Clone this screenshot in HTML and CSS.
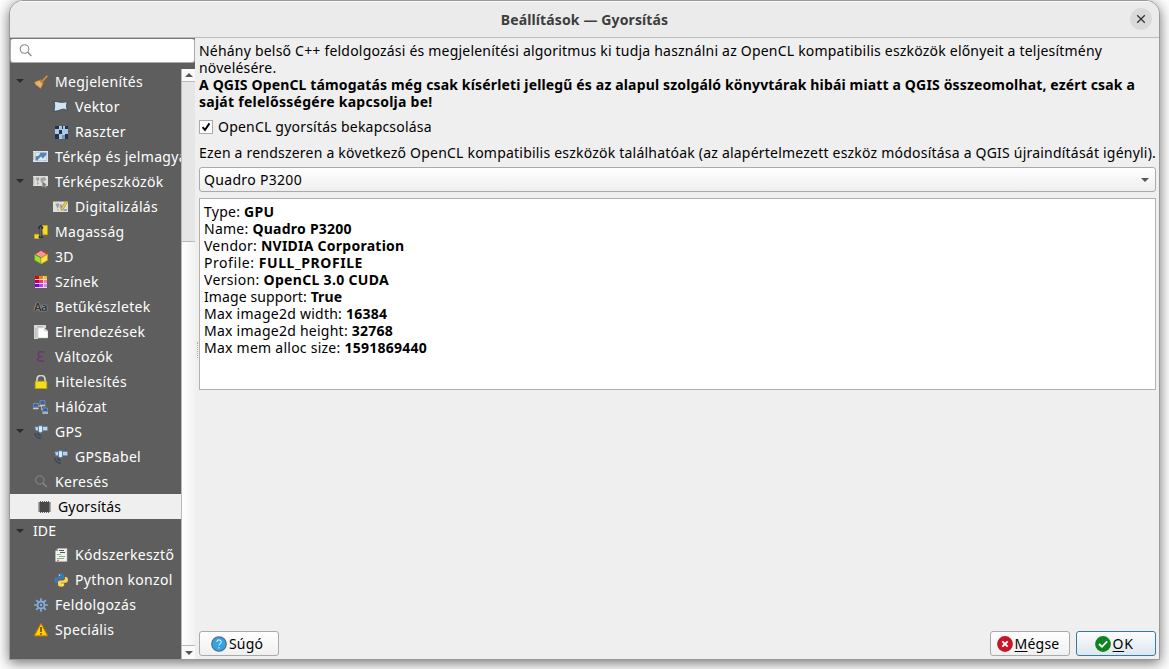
FILE: index.html
```html
<!DOCTYPE html>
<html lang="hu">
<head>
<meta charset="utf-8">
<title>Beállítások — Gyorsítás</title>
<link rel="stylesheet" href="styles.css">
</head>
<body>
<div class="window">
  <header class="titlebar">
    <h1 class="title">Beállítások — Gyorsítás</h1>
    <button class="close" aria-label="Bezárás"><svg viewBox="0 0 10 10" width="10" height="10"><path d="M1.2 1.2 8.800 8.800M8.800 1.200 1.200 8.800" stroke="#333" stroke-width="1.300"/></svg></button>
  </header>
  <div class="body">
    <aside class="sidebar">
      <div class="search"><svg viewBox="0 0 14 14" width="14" height="14"><circle cx="5.500" cy="5" r="4.300" fill="none" stroke="#8a8a8a" stroke-width="1.100"/><path d="M8.600 8.100 12.400 12" stroke="#8a8a8a" stroke-width="1.400"/></svg></div>
      <div class="tree-area">
        <ul class="tree">
          <li class="row open"><svg class="ico" viewBox="0 0 14 14"><path d="M13.300.7 8.300 6.200" stroke="#e0902c" stroke-width="1.700"/><path d="M6.300 4 10 7.700 8.800 9 5.200 5.300Z" fill="#c87f28"/><path d="M5.200 5.300 8.900 9 6.600 13.400 4 11.600 3.400 10.800 1.800 10 .5 7.200Z" fill="#e5b36a" stroke="#b87932" stroke-width=".6"/></svg><span>Megjelenítés</span></li>
          <li class="row sub"><svg class="ico wide" viewBox="0 0 15 14"><path d="M1 1.800C4 .6 7 3.700 14.300 1.600 13.300 4.500 13.300 7.500 14.300 10.800 10 6.500 6 12 .8 11 1.800 8 2 5 1 1.800Z" fill="#d5e2f0" stroke="#2f4963" stroke-width=".9"/></svg><span>Vektor</span></li>
          <li class="row sub"><svg class="ico" viewBox="0 0 14 14" shape-rendering="crispEdges"><path fill="#abc8e8" d="M1 1h13v13H1z"/><path fill="#1f344b" d="M1 1h4v3H1zM8 1h3v3H8zM5 4h3v1H5zM11 1h3v3h-3zM5 5h3v4H5zM1 9h4v5H1zM11 9h3v5h-3z"/><path fill="#abc8e8" d="M5 1h3v4H5zM9 1h2v3H9zM5 10h3v4H5z"/><path fill="#1f344b" d="M8 10h3v4H8z" opacity=".35"/></svg><span>Raszter</span></li>
          <li class="row"><svg class="ico wide" viewBox="0 0 15 14"><path fill="#e4e4e2" d="M0 1h15v11H0z"/><path fill="#5485ba" d="M2.500 2.500h11v8h-11z"/><path d="M2.500 2.500h5L6 5.500 2.500 6.500zM5 9.500l3-3 2 2 3.500-4v5.500L10 10.500H5z" fill="#dceaf5"/><path d="M0 3h1.300M0 5h1.300M0 7h1.300M0 9h1.300" stroke="#888" stroke-width=".7"/></svg><span>Térkép és jelmagya</span></li>
          <li class="row open"><svg class="ico wide" viewBox="0 0 15 14"><path fill="#dededc" d="M0 1h15v10H0z"/><path d="M2.500 3l3-1 1 2-2 3zM7.500 3l4-1 2 3-3 1-1 3-2-3zM4 7l2 1-2 2z" fill="#a3a3a1"/><path d="M9.300 6v6l2-1.200 1.200 2 .9-.6-1.200-2H14z" fill="#777" stroke="#ccc" stroke-width=".4"/><path d="M0 3h1.300M0 5h1.300M0 7h1.300M0 9h1.300" stroke="#888" stroke-width=".7"/></svg><span>Térképeszközök</span></li>
          <li class="row sub"><svg class="ico wide" viewBox="0 0 15 14"><path fill="#dededc" d="M0 1.500h15v10.500H0z"/><path d="M2.500 4l3-1 1 2-2 4zM7.500 4l2 1-1 4-2-2zM4 9l2 1-1 1zM11 9h3v2h-4z" fill="#a0a09e"/><path d="M12.900.8 14.600 1.900 9.900 9.400 8.200 10.400 8.200 8.300Z" fill="#f3d849" stroke="#8a7424" stroke-width=".6"/></svg><span>Digitalizálás</span></li>
          <li class="row"><svg class="ico" viewBox="0 0 14 14"><path d="M8.300.5h5.200v9.200H9zM.5 9.300h4.500v4.200H.5z" fill="#f4dc25" stroke="#c5a310" stroke-width=".7"/><path d="M6.700 11.800V1.300M4.500 3.500 6.700 1 8.900 3.500M4.700 12h4.200" fill="none" stroke="#2c3135" stroke-width="2"/><path d="M6.700 11.800V1.800" stroke="#8a9094" stroke-width=".7"/></svg><span>Magasság</span></li>
          <li class="row"><svg class="ico" viewBox="0 0 14 14"><path d="M7 .3 13.500 4.200 7 8 .5 4.200Z" fill="#f59595" stroke="#bd2c2c" stroke-width=".9"/><path d="M.5 4.200 7 8V14L.5 10.300Z" fill="#a0e036" stroke="#4e9b19" stroke-width=".8"/><path d="M13.500 4.200 7 8V14l6.500-3.700Z" fill="#fce44c" stroke="#caa10e" stroke-width=".8"/></svg><span>3D</span></li>
          <li class="row"><svg class="ico" viewBox="0 0 14 14" shape-rendering="crispEdges"><path fill="#f0d6e4" d="M1 1h12v12H1z"/><path fill="#e60000" d="M1 1h4v3H1z"/><path fill="#f28400" d="M5 1h4v3H5z"/><path fill="#f5c400" d="M10 1h3v3h-3z"/><path fill="#b80058" d="M1 5h4v3H1z"/><path fill="#ea3779" d="M5 5h4v3H5z"/><path fill="#f47ca8" d="M10 5h3v3h-3z"/><path fill="#7400ed" d="M1 9h4v3H1z"/><path fill="#a44cf0" d="M5 9h4v3H5z"/><path fill="#c48af3" d="M10 9h3v3h-3z"/></svg><span>Színek</span></li>
          <li class="row"><i class="ico font-ico">Aa</i><span>Betűkészletek</span></li>
          <li class="row"><svg class="ico" viewBox="0 0 14 14"><path d="M0 0h12v3H4v11H0z" fill="#d8d8d6"/><path d="M4 1v1.500M6 1v1.500M8 1v1.500M1 4h1.500M1 6h1.500M1 8h1.500M1 10h1.500M1 12h1.500" stroke="#888" stroke-width=".6"/><path d="M4 2.800h6l4 3.500V13H4z" fill="#fff" stroke="#b5b5b3" stroke-width=".5"/><path d="M10 2.800v3.500h4z" fill="#d0d0ce"/></svg><span>Elrendezések</span></li>
          <li class="row"><i class="ico eps-ico">ε</i><span>Változók</span></li>
          <li class="row"><svg class="ico" viewBox="0 0 14 14"><path d="M3 7V4.300a4 4 0 0 1 8 0V7" fill="none" stroke="#d5d5d2" stroke-width="1.700"/><path d="M1.200 6.300h11.600v7.200H1.200z" fill="#f2dc1c" stroke="#c3a80c" stroke-width=".7"/></svg><span>Hitelesítés</span></li>
          <li class="row"><svg class="ico wide" viewBox="0 0 15 14"><path d="M5 6h3.500M8.500 5v5h2" stroke="#bbb" fill="none" stroke-width=".9"/><path d="M.3 3.500h5v3.500h-5zM7 .8h5v3.500H7zM9.700 8h5v3.500h-5z" fill="#2f62a0" stroke="#8fb0d5" stroke-width=".6"/><path d="M0 8.500h5.600M6.700 5.700h5.600M9.400 13h5.600" stroke="#c9c9c7" stroke-width="1.300"/></svg><span>Hálózat</span></li>
          <li class="row open"><svg class="ico" viewBox="0 0 14 14"><path d="M.7 1.700h4v4h-3zM8.500 1.500h5.200v4.200H8.500z" fill="#bcd3ec" stroke="#526f8e" stroke-width=".6"/><path d="M4.500.8h4v6l-2 1-2-1z" fill="#dfebf7" stroke="#3c77ad" stroke-width=".8"/><path d="M3.700 7.800a3 3 0 0 0 3 2.700M.8 8a6 6 0 0 0 6 5.300" stroke="#34465b" fill="none" stroke-width="1.500"/></svg><span>GPS</span></li>
          <li class="row sub"><svg class="ico" viewBox="0 0 14 14"><path d="M.7 1.700h4v4h-3zM8.500 1.500h5.200v4.200H8.500z" fill="#bcd3ec" stroke="#526f8e" stroke-width=".6"/><path d="M4.500.8h4v6l-2 1-2-1z" fill="#dfebf7" stroke="#3c77ad" stroke-width=".8"/><path d="M3.700 7.800a3 3 0 0 0 3 2.700M.8 8a6 6 0 0 0 6 5.300" stroke="#34465b" fill="none" stroke-width="1.500"/></svg><span>GPSBabel</span></li>
          <li class="row"><svg class="ico" viewBox="0 0 14 14"><circle cx="5.800" cy="5" r="4.200" fill="none" stroke="#8d8d8d" stroke-width=".9"/><path d="M8.800 8 12.800 12" stroke="#8d8d8d" stroke-width="1.200"/></svg><span>Keresés</span></li>
          <li class="row selected"><svg class="ico" viewBox="0 0 14 14"><path d="M3.500 1v12M5.500 1v12M7.500 1v12M9.500 1v12M11.500 1v12M1 3h13M1 5h13M1 7h13M1 9h13M1 11h13" stroke="#666" stroke-width="1"/><path d="M2.500 2h10v10h-10z" fill="#484848"/></svg><span>Gyorsítás</span></li>
          <li class="row group open"><span>IDE</span></li>
          <li class="row sub"><svg class="ico" viewBox="0 0 14 14"><path d="M4 .5h9v13H1.500V3z" fill="#f0f0ee" stroke="#bbb" stroke-width=".5"/><path d="M4 .5V3H1.500z" fill="#999"/><path d="M5 2.500h5M6 4.500h5" stroke="#555" stroke-width="1"/><path d="M3 6.500h4M5 8.500h6M3 10.500h7" stroke="#7fae7c" stroke-width=".9"/><path d="M3 12.300h2" stroke="#e05555"/></svg><span>Kódszerkesztő</span></li>
          <li class="row sub"><svg class="ico" viewBox="0 0 14 14"><path d="M6.900.3C4.500.3 4 1.200 4 2.200v1.500h3.200v.6H2.400C1 4.300.2 5.500.2 7.200s.9 2.900 2 2.900h1.400V8.400c0-1 .9-1.900 2-1.900h3c1 0 1.600-.8 1.600-1.700V2.200C10.200.9 8.900.3 6.900.3z" fill="#3b79b0"/><path d="M7.300 13.700c2.400 0 2.900-.9 2.900-1.900v-1.500H7v-.6h4.800c1.400 0 2.200-1.200 2.200-2.900s-.9-2.900-2-2.900h-1.100v1.700c0 1-.9 1.900-2 1.900h-3C4.900 7.500 4 8.300 4 9.200v2.600c0 1.300 1.300 1.900 3.300 1.900z" fill="#ffd447"/><circle cx="5.600" cy="2.200" r=".6" fill="#fff"/><circle cx="8.600" cy="11.900" r=".6" fill="#fff"/></svg><span>Python konzol</span></li>
          <li class="row"><svg class="ico" viewBox="0 0 14 14"><path d="M7 .2v13.600M.2 7h13.600M2.200 2.200l9.600 9.600M11.800 2.200l-9.600 9.600" stroke="#82ade0" stroke-width="1.700"/><circle cx="7" cy="7" r="3.500" fill="#5e5e5e" stroke="#82ade0" stroke-width="1.800"/><circle cx="7" cy="7" r="1.200" fill="#82ade0"/></svg><span>Feldolgozás</span></li>
          <li class="row"><svg class="ico" viewBox="0 0 14 14"><path d="M7 .6 13.600 12.800H.4Z" fill="#ffd500" stroke="#e47a00" stroke-width=".9" stroke-linejoin="round"/><path d="M7 4v5M7 10v1.700" stroke="#6b3b00" stroke-width="1.500"/></svg><span>Speciális</span></li>
        </ul>
        <div class="scrollbar"><div class="arrow up"></div><div class="thumb"></div><div class="groove"></div><div class="arrow down"></div></div>
      </div>
    </aside>
    <div class="splitter"></div>
    <main class="page">
      <p class="intro">Néhány belső C++ feldolgozási és megjelenítési algoritmus ki tudja használni az OpenCL kompatibilis eszközök előnyeit a teljesítmény<br>növelésére.<br><b>A QGIS OpenCL támogatás még csak kísérleti jellegű és az alapul szolgáló könyvtárak hibái miatt a QGIS összeomolhat, ezért csak a<br><span class="warn-end">saját felelősségére kapcsolja be!</span></b></p>
      <div class="check"><span class="box"><svg viewBox="0 0 10 10" width="10" height="10"><path d="M1.600 5.200 4 8 8.400 1.400" fill="none" stroke="#000" stroke-width="1.900"/></svg></span><span class="check-label">OpenCL gyorsítás bekapcsolása</span></div>
      <p class="hint">Ezen a rendszeren a következő OpenCL kompatibilis eszközök találhatóak (az alapértelmezett eszköz módosítása a QGIS újraindítását igényli).</p>
      <div class="combo">Quadro P3200</div>
      <div class="info">
        <div>Type: <b>GPU</b></div>
        <div>Name: <b>Quadro P3200</b></div>
        <div>Vendor: <b>NVIDIA Corporation</b></div>
        <div class="profile">Profile: <b>FULL_PROFILE</b></div>
        <div class="version">Version: <b>OpenCL 3.0 CUDA</b></div>
        <div class="image">Image support: <b>True</b></div>
        <div>Max image2d width: <b>16384</b></div>
        <div>Max image2d height: <b>32768</b></div>
        <div>Max mem alloc size: <b>1591869440</b></div>
      </div>
      <div class="fill"></div>
      <footer class="buttons">
        <button class="btn help"><svg viewBox="0 0 16 16" width="16" height="16"><circle cx="8" cy="8" r="7.300" fill="#34a3e4" stroke="#5b6770" stroke-width="1.100"/><path d="M5.800 6a2.200 2 0 1 1 3.400 1.600Q8 8.300 8 9.600M8 11v1.500" fill="none" stroke="#d9f0fc" stroke-width="1.100"/></svg><span>Súgó</span></button>
        <span class="spacer"></span>
        <button class="btn"><svg viewBox="0 0 16 16" width="16" height="16"><circle cx="8" cy="8" r="7.900" fill="#c7162b"/><path d="M5.300 5.300 10.700 10.700M10.700 5.300 5.300 10.700" stroke="#fff" stroke-width="1.900"/></svg><span><u>M</u>égse</span></button>
        <button class="btn default"><svg viewBox="0 0 16 16" width="16" height="16"><circle cx="8" cy="8" r="7.900" fill="#0e8420"/><path d="M4 8 7 10.800 12.200 5.400" fill="none" stroke="#fff" stroke-width="1.800"/></svg><span><u>O</u>K</span></button>
      </footer>
    </main>
  </div>
</div>
</body>
</html>
```
FILE: styles.css
```css
* { box-sizing: border-box; }
body { margin: 0; width: 1169px; height: 669px; overflow: hidden; padding: 0 9px; background: #fdfdfd; font-family: "Noto Sans", "Open Sans", sans-serif; font-size: 14px; line-height: 17px; color: #000; }
.window { width: 1151px; height: 660px; border: 1px solid #999; border-radius: 14px 14px 0 0; overflow: hidden; background: #efefef; box-shadow: 0 3px 13px rgba(0,0,0,.55); display: flex; flex-direction: column; }
.titlebar { height: 37px; flex: none; display: flex; align-items: center; justify-content: center; background: #ebebeb; border-bottom: 1px solid #bdbdbd; box-shadow: inset 0 1px #f9f9f9; position: relative; }
.title { margin: 0; font-size: 14px; font-weight: 700; color: #3d3d3d; letter-spacing: .12px; }
.close { position: absolute; right: 7px; top: 7px; width: 22px; height: 22px; border: 0; border-radius: 50%; background: #dadada; display: grid; place-items: center; padding: 0; }
.body { display: flex; flex: 1; min-height: 0; }
.sidebar { width: 185px; flex: none; background: #5e5e5e; display: flex; flex-direction: column; }
.search { height: 25px; flex: none; background: #fff; border: 1px solid #aaa; border-top-color: #777; border-radius: 3px; padding: 5px 8px; }
.search svg, .btn svg { display: block; flex: none; }
.tree-area { display: flex; flex: 1; min-height: 0; padding-top: 6px; }
.tree { width: 171px; margin: 0; padding: 0; list-style: none; overflow: hidden; color: #fff; letter-spacing: .33px; }
.row { height: 25px; display: flex; align-items: center; padding-left: 24px; white-space: nowrap; position: relative; }
.row.sub { padding-left: 44px; }
.row.group { height: 24px; padding-left: 23px; padding-bottom: 2px; margin-bottom: -1px; letter-spacing: .1px; }
.row.selected { background: #efefef; color: #000; padding-left: 27px; letter-spacing: .17px; }
.row.open::before { content: ""; position: absolute; left: 6px; top: 10px; border: 4px solid transparent; border-top-color: #2b2b2b; border-bottom: 0; }
.ico { width: 14px; height: 14px; margin-right: 7px; flex: none; }
.ico.wide { width: 15px; margin-left: -1px; }
.font-ico { font: bold 11px/14px "Noto Sans", sans-serif; letter-spacing: -.5px; color: #2e3436; text-shadow: 0 0 1px #ccc, 0 0 1px #ccc; }
.eps-ico { font: 19px/10px "Noto Sans", sans-serif; color: #6a3a6e; text-align: center; }
.scrollbar { width: 14px; display: flex; flex-direction: column; border-left: 1px solid #b9b9b9; background: #f7f7f7; }
.arrow { height: 13px; display: grid; place-items: center; background: #fafafa; flex: none; }
.arrow::after { content: ""; border: 4px solid transparent; }
.up { border-bottom: 1px solid #b9b9b9; }
.up::after { border-bottom-color: #555; border-top: 0; }
.down { height: 14px; border-top: 1px solid #b9b9b9; }
.down::after { border-top-color: #555; border-bottom: 0; }
.thumb { height: 160px; background: #e6e6e6; border-bottom: 1px solid #b9b9b9; }
.groove { flex: 1; background: linear-gradient(90deg, #fff, #f2f2f2); }
.splitter { width: 4px; display: flex; align-items: flex-start; justify-content: flex-end; padding: 304px 1px 0 0; }
.splitter::after { content: ""; height: 16px; border-right: 1px dotted #aaa; }
.page { flex: 1; min-width: 0; padding: 4px 3px 3px 0; display: flex; flex-direction: column; white-space: nowrap; letter-spacing: .205px; }
.page p { margin: 0; }
.intro { height: 78px; }
.intro b { letter-spacing: .152px; }
.intro .warn-end { letter-spacing: .26px; }
.check { display: flex; align-items: center; gap: 5px; height: 14px; }
.check-label { margin-top: -2px; }
.box { width: 14px; height: 14px; border: 1px solid #aaa; background: #fff; display: grid; place-items: center; }
.hint { padding-top: 10px; height: 33px; letter-spacing: .212px; }
.combo { height: 25px; border: 1px solid #aaa; border-radius: 3px; background: linear-gradient(#fff, #eee); display: flex; align-items: center; justify-content: space-between; padding: 0 6px 0 4px; letter-spacing: .32px; }
.combo::after { content: ""; border: 4px solid transparent; border-top-color: #555; border-bottom: 0; }
.info { height: 192px; margin-top: 6px; padding: 4px 4px; border: 1px solid #b1b1b1; background: #fff; letter-spacing: .25px; }
.info .profile { letter-spacing: .56px; }
.info .version { letter-spacing: .32px; }
.info .image { letter-spacing: .1px; }
.fill { flex: 1; }
.buttons { display: flex; gap: 6px; }
.spacer { flex: 1; }
.btn { width: 80px; height: 25px; border: 1px solid #aaa; border-radius: 3px; background: linear-gradient(#fff, #f0f0f0); font: inherit; letter-spacing: .2px; color: #000; display: flex; align-items: center; justify-content: center; gap: 2px; padding: 0 4px 0 0; }
.btn.default { border-color: #377a9f; background: linear-gradient(#fbfcfd, #dce7ef); letter-spacing: .6px; }
.btn u { text-underline-offset: 2px; }
```
